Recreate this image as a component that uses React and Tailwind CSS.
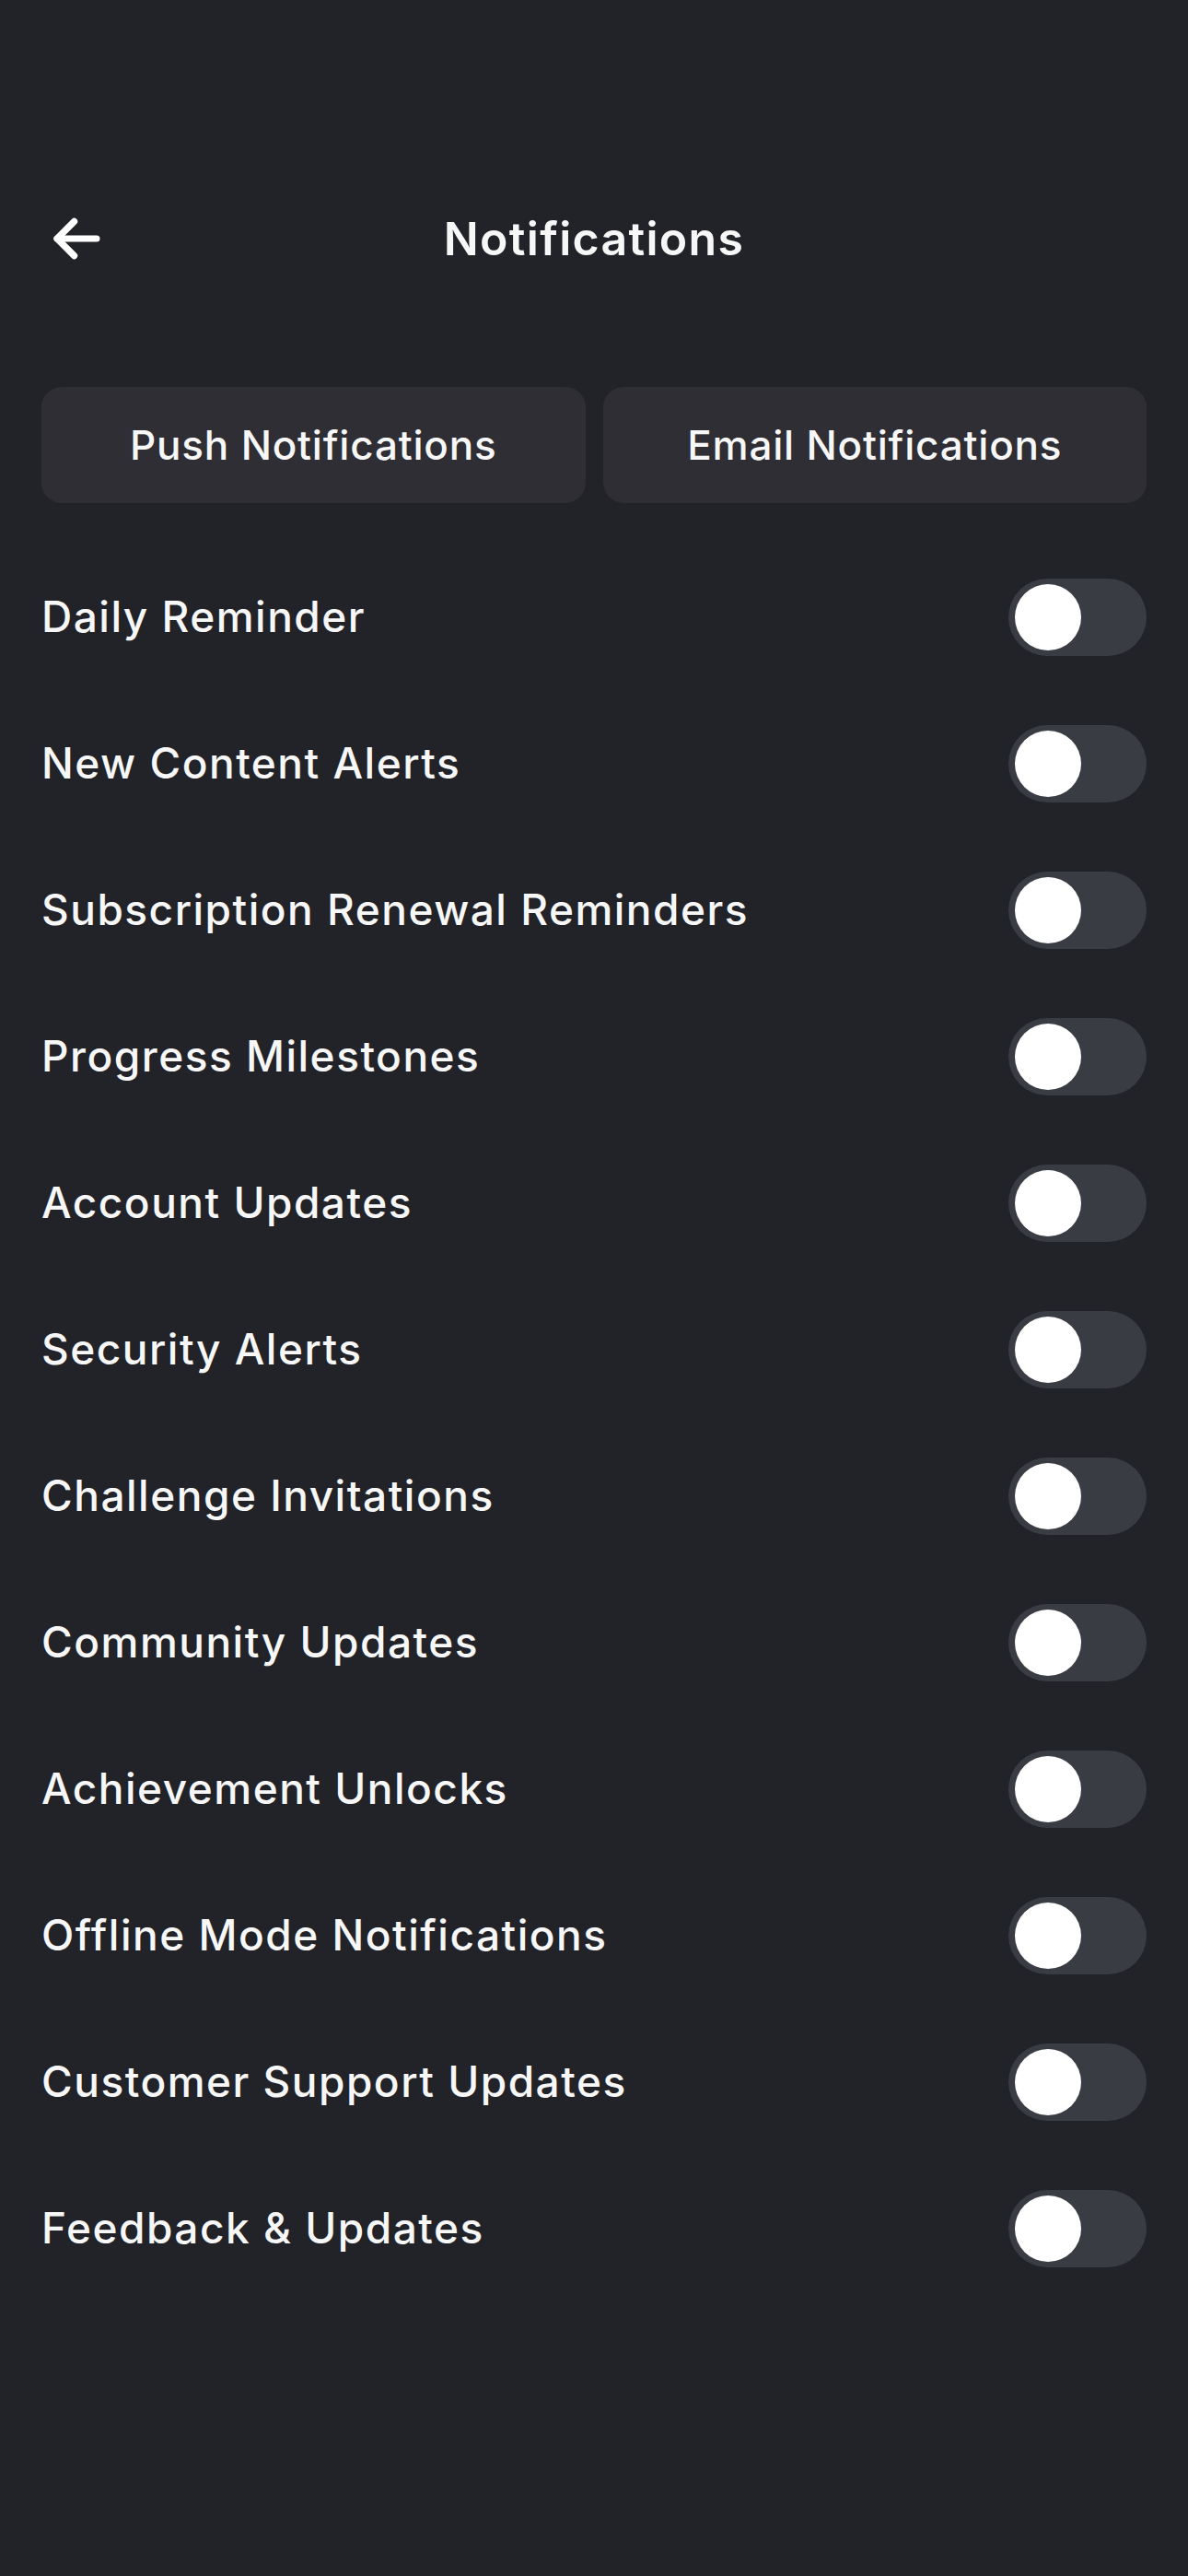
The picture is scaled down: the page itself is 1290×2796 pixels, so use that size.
import React from "react";

const items = [
  "Daily Reminder",
  "New Content Alerts",
  "Subscription Renewal Reminders",
  "Progress Milestones",
  "Account Updates",
  "Security Alerts",
  "Challenge Invitations",
  "Community Updates",
  "Achievement Unlocks",
  "Offline Mode Notifications",
  "Customer Support Updates",
  "Feedback & Updates",
];

function Toggle() {
  return (
    <div className="w-[150px] h-[84px] rounded-full bg-[#3a3c43] flex items-center px-[7px]">
      <div className="w-[72px] h-[72px] rounded-full bg-white" />
    </div>
  );
}

export default function App() {
  return (
    <div
      className="min-h-[2796px] w-[1290px] bg-[#222328] text-[#f7f7f8] px-[45px] pt-[199px]"
      style={{ fontFamily: "Inter, 'Noto Sans', sans-serif" }}
    >
      <div className="relative h-[120px] flex items-center justify-center">
        <div className="absolute left-[2px] top-0 bottom-0 flex items-center">
          <svg width="72" height="72" viewBox="0 0 24 24" fill="none" stroke="white" strokeWidth="2.4" strokeLinecap="round" strokeLinejoin="round">
            <path d="M19.3 12H5" />
            <path d="M11.2 18.2L5 12l6.2-6.2" />
          </svg>
        </div>
        <div className="text-[50px] font-semibold tracking-[1.3px]">Notifications</div>
      </div>

      <div className="mt-[101px] grid grid-cols-2 gap-[19px]">
        <div className="h-[126px] rounded-[22px] bg-[#2e2e34] flex items-center justify-center text-[44px] font-medium tracking-[0.8px]">
          Push Notifications
        </div>
        <div className="h-[126px] rounded-[22px] bg-[#2e2e34] flex items-center justify-center text-[44px] font-medium tracking-[0.8px]">
          Email Notifications
        </div>
      </div>

      <div className="mt-[44px] flex flex-col">
        {items.map((t) => (
          <div key={t} className="h-[159px] flex items-center justify-between">
            <div className="text-[46px] font-medium tracking-[1.5px]">{t}</div>
            <Toggle />
          </div>
        ))}
      </div>
    </div>
  );
}
